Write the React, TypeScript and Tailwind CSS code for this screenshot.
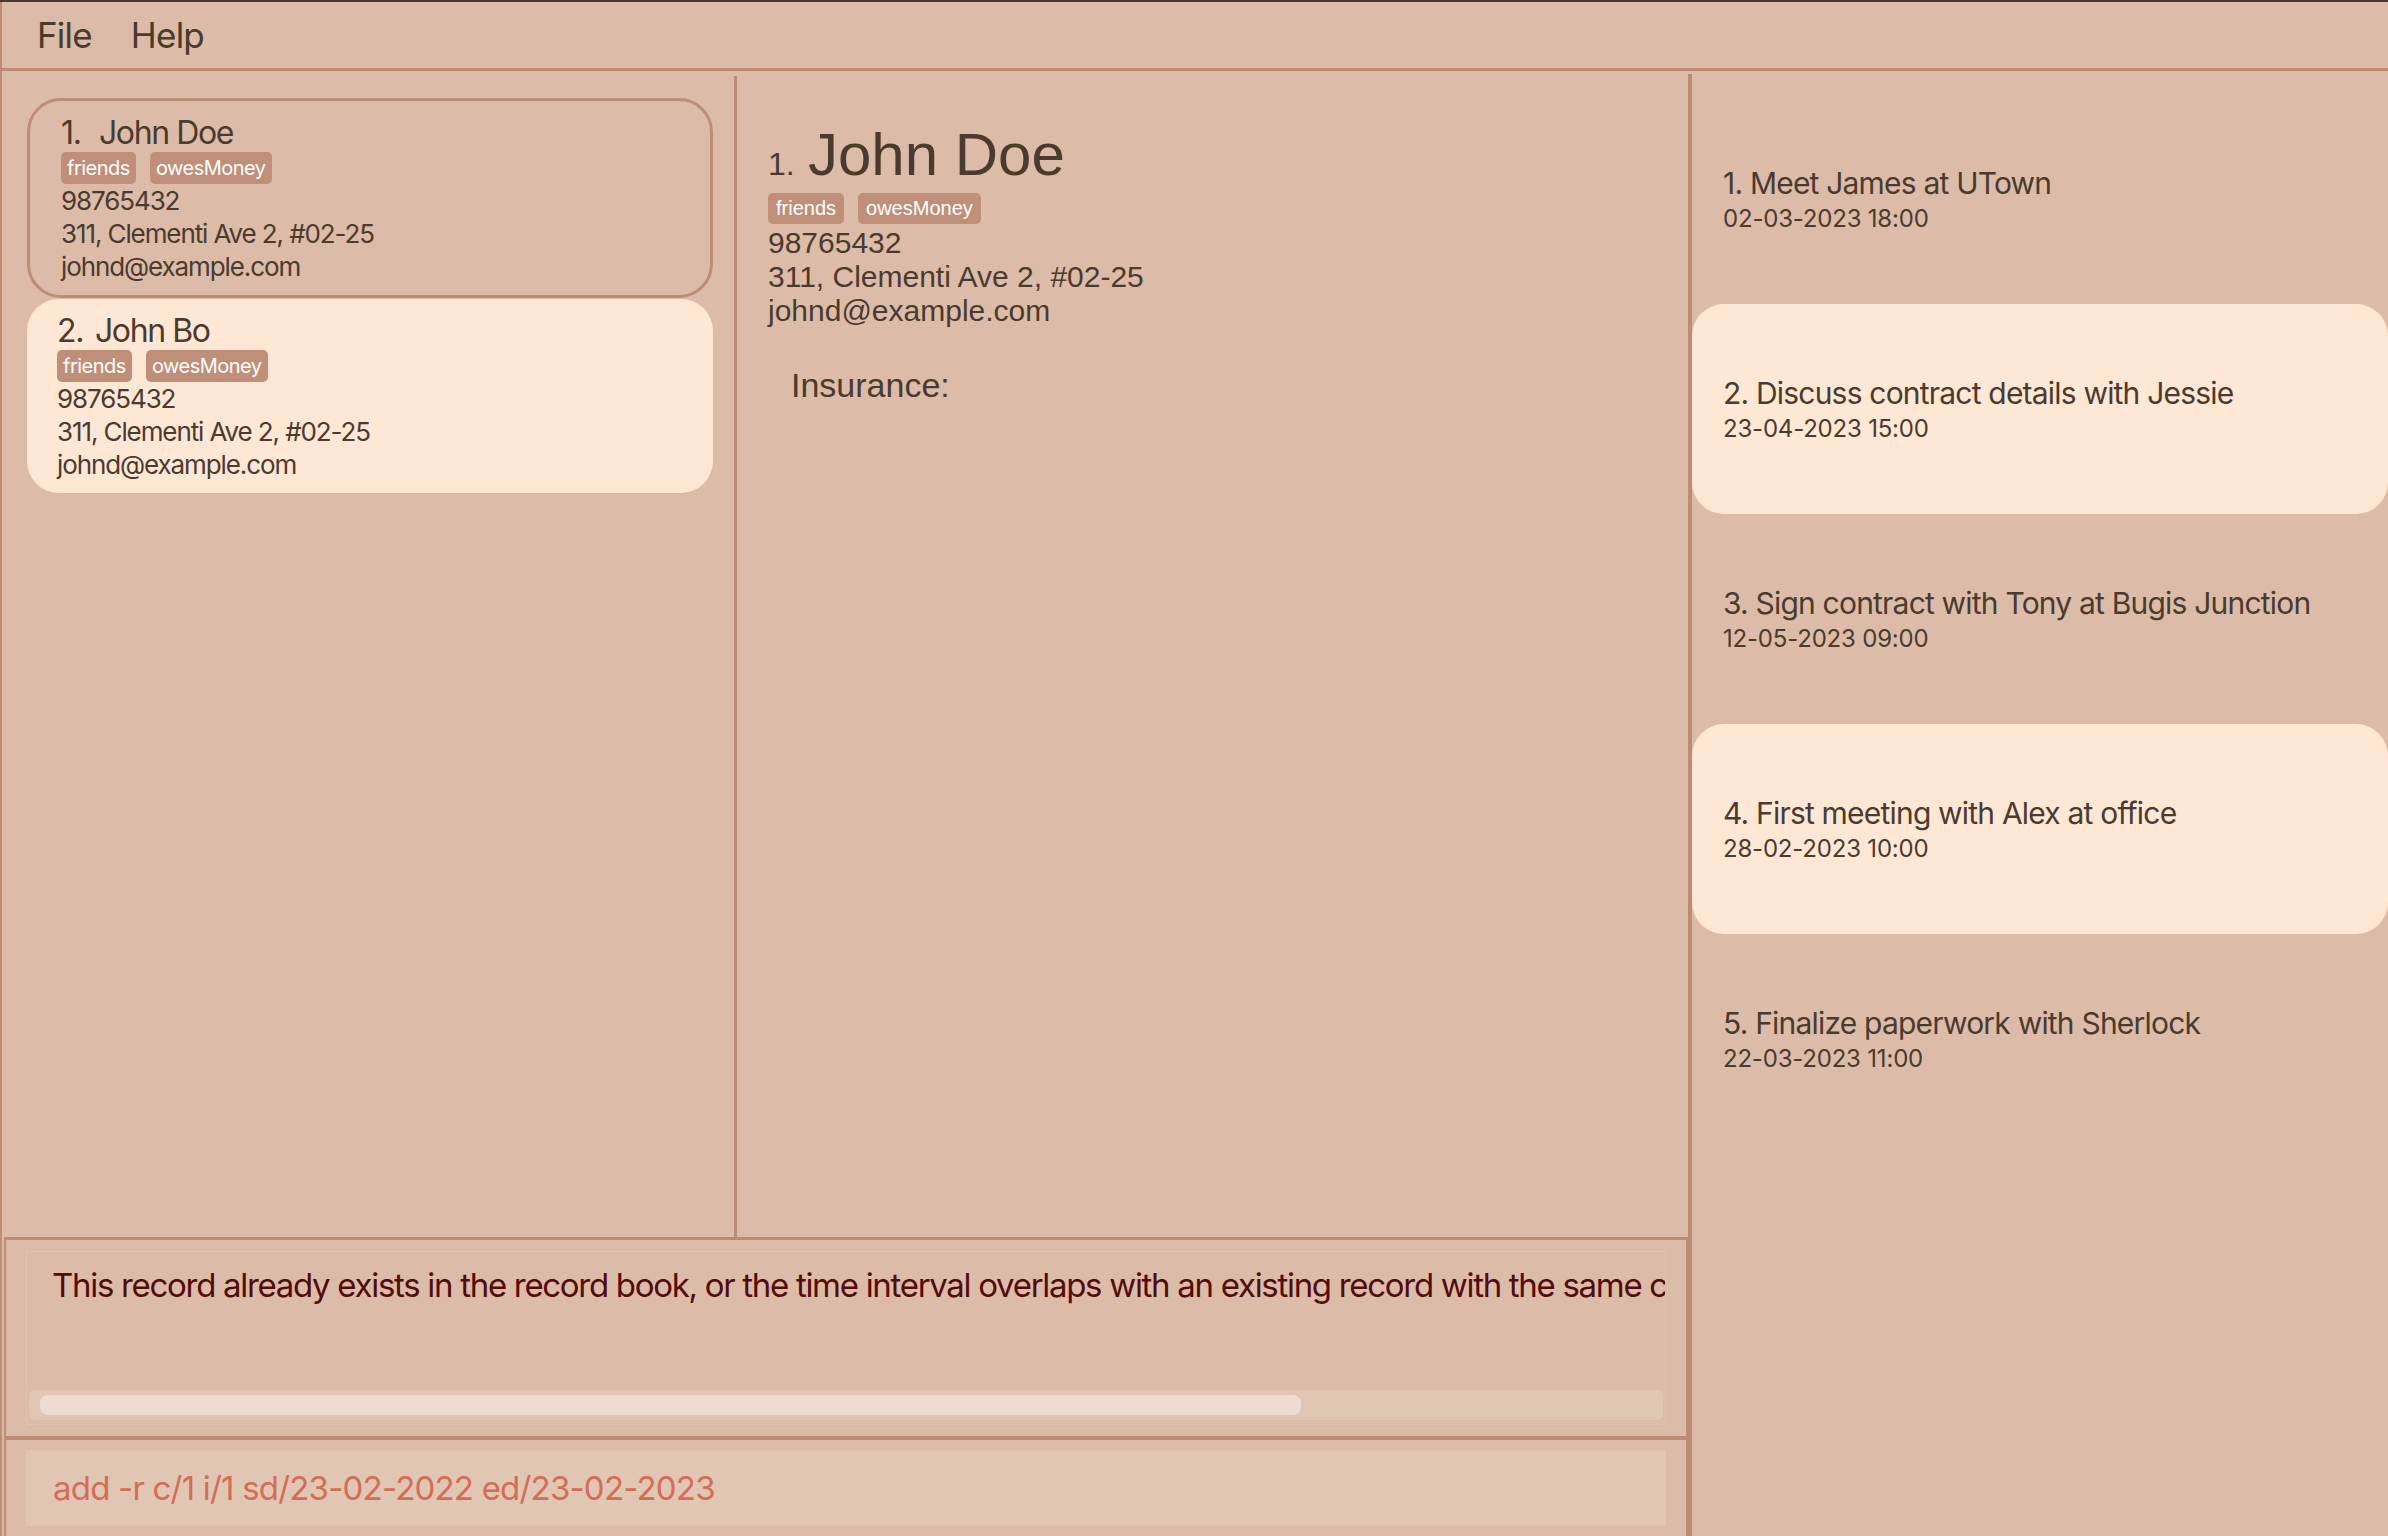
import React from 'react'

const persons = [
  {
    index: 1,
    name: 'John Doe',
    tags: ['friends', 'owesMoney'],
    phone: '98765432',
    address: '311, Clementi Ave 2, #02-25',
    email: 'johnd@example.com',
    selected: true,
  },
  {
    index: 2,
    name: 'John Bo',
    tags: ['friends', 'owesMoney'],
    phone: '98765432',
    address: '311, Clementi Ave 2, #02-25',
    email: 'johnd@example.com',
    selected: false,
  },
]

const records = [
  { title: 'Meet James at UTown', when: '02-03-2023 18:00' },
  { title: 'Discuss contract details with Jessie', when: '23-04-2023 15:00' },
  { title: 'Sign contract with Tony at Bugis Junction', when: '12-05-2023 09:00' },
  { title: 'First meeting with Alex at office', when: '28-02-2023 10:00' },
  { title: 'Finalize paperwork with Sherlock', when: '22-03-2023 11:00' },
]

const sans = "font-['Inter','Noto_Sans',sans-serif]"
const arial = "font-['Liberation_Sans',Arial,sans-serif]"

function PersonCard({ p }: { p: (typeof persons)[number] }) {
  return (
    <div
      className={
        p.selected
          ? 'rounded-[34px] border-[3px] border-[#be8d76] pt-[13px] pb-[12px] pl-[31px]'
          : 'rounded-[32px] bg-[#ffe7d6] pt-[13px] pb-[12px] pl-[30px]'
      }
    >
      <div className="flex text-[32px] leading-[38px] tracking-[-1.4px]">
        <span className="w-[38px]">{p.index}.</span>
        <span>{p.name}</span>
      </div>
      <div className="flex gap-[14px]">
        {p.tags.map((t) => (
          <span
            key={t}
            className="h-[32px] px-[6px] rounded-[5px] bg-[#bf8f79] text-white text-[20px] leading-[32px] tracking-[-0.5px]"
          >
            {t}
          </span>
        ))}
      </div>
      <div className="text-[26px] leading-[33px] tracking-[-1.1px]">
        <div>{p.phone}</div>
        <div>{p.address}</div>
        <div>{p.email}</div>
      </div>
    </div>
  )
}

export default function App() {
  return (
    <div
      className={`h-screen w-full flex flex-col overflow-hidden bg-[#dcbca8] text-[#4b3a2e] border-t-2 border-[#4a382e] ${sans}`}
    >
      {/* Menu */}
      <div className="h-[69px] shrink-0 flex items-center gap-[39px] pl-[35px] pt-[1px] border-l-2 border-b-[3px] border-[#bd8c75] text-[35px] tracking-[-0.8px]">
        <span>File</span>
        <span>Help</span>
      </div>

      <div className="flex flex-1 min-h-0">
        {/* Left block */}
        <div className="w-[1688px] shrink-0 flex flex-col border-l-2 border-[#bd8c75]">
          <div className="flex flex-1 min-h-0">
            {/* Person list */}
            <div className="w-[732px] shrink-0 pt-[27px] pl-[25px] pr-[21px] flex flex-col gap-[1px]">
              {persons.map((p) => (
                <PersonCard key={p.index} p={p} />
              ))}
            </div>
            <div className="w-[3px] mt-[5px] bg-[#bd8c75]" />

            {/* Detail */}
            <div className={`flex-1 pl-[31px] pt-[54px] ${arial}`}>
              <div className="flex items-baseline h-[60px] leading-[60px]">
                <span className="text-[32px] w-[40px]">1.</span>
                <span className="text-[60px]">John Doe</span>
              </div>
              <div className="flex gap-[14px] mt-[8px]">
                {['friends', 'owesMoney'].map((t) => (
                  <span
                    key={t}
                    className="h-[31px] px-[8px] rounded-[5px] bg-[#bf8f79] text-white text-[20px] leading-[31px]"
                  >
                    {t}
                  </span>
                ))}
              </div>
              <div className="mt-[2px] text-[30px] leading-[34px]">
                <div>98765432</div>
                <div>311, Clementi Ave 2, #02-25</div>
                <div>johnd@example.com</div>
              </div>
              <div className="mt-[37px] pl-[23px] text-[34px] leading-[40px]">Insurance:</div>
            </div>
          </div>

          {/* Result display */}
          <div className="h-[203px] shrink-0 ml-[2px] border-t-[3px] border-l-2 border-r-2 border-b-4 border-[#bd8c75] px-[20px] pt-[11px] pb-[11px]">
            <div className="h-full border border-[#e0c4b1] flex flex-col">
              <div className="flex-1 pl-[25px] pt-[13px] pr-[3px] overflow-hidden whitespace-nowrap text-[33px] leading-[40px] tracking-[-1.3px] text-[#530b0b]">
                This record already exists in the record book, or the time interval overlaps with an existing record with the same client and insurance.
              </div>
              <div className="h-[30px] mx-[2px] mb-[4px] rounded-[6px] bg-[#e1c6b4] flex items-center pl-[11px]">
                <div className="h-[20px] w-[1261px] rounded-[8px] bg-[#ecdcd2]" />
              </div>
            </div>
          </div>

          {/* Command box */}
          <div className="h-[96px] shrink-0 ml-[2px] border-l-2 border-r-2 border-[#bd8c75] px-[20px] pt-[10px] pb-[10px]">
            <div className="h-[76px] bg-[#e1c6b4] flex items-center pl-[27px] text-[33px] leading-[40px] tracking-[-0.8px] text-[#d46d57]">
              add -r c/1 i/1 sd/23-02-2022 ed/23-02-2023
            </div>
          </div>
        </div>

        <div className="w-[4px] shrink-0 mt-[3px] bg-[#bd8c75]" />

        {/* Records */}
        <div className="flex-1 pt-[23px]">
          {records.map((r, i) => (
            <div
              key={i}
              className={`h-[210px] flex flex-col justify-center gap-[2px] pl-[31px] rounded-[32px] ${
                i % 2 === 1 ? 'bg-[#ffe7d6]' : ''
              }`}
            >
              <div className="text-[30px] leading-[36px] tracking-[-0.8px]">
                {i + 1}. {r.title}
              </div>
              <div className="text-[24px] leading-[30px] tracking-[-0.2px] pt-[1px]">{r.when}</div>
            </div>
          ))}
        </div>
      </div>
    </div>
  )
}
